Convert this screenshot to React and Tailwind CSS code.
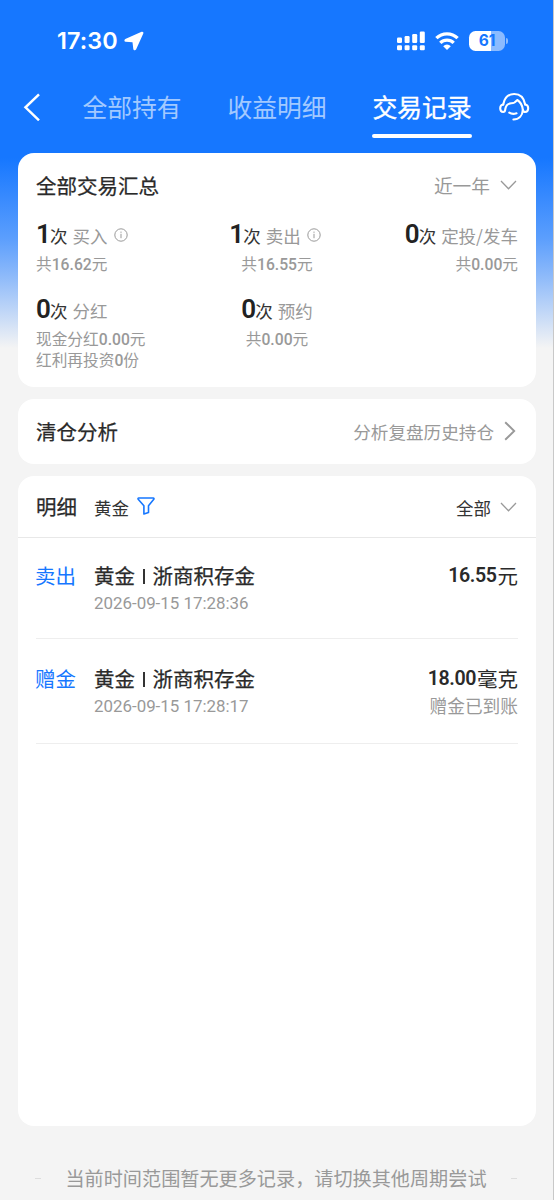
import React, { useState } from "react";
import clsx from "clsx";

const TABS = ["全部持有", "收益明细", "交易记录"];

const SUMMARY = [
  { count: 1, label: "买入", info: true, lines: [["共", "16.62", "元"]] },
  { count: 1, label: "卖出", info: true, lines: [["共", "16.55", "元"]] },
  { count: 0, label: "定投/发车", lines: [["共", "0.00", "元"]] },
  {
    count: 0,
    label: "分红",
    lines: [
      ["现金分红", "0.00", "元"],
      ["红利再投资", "0", "份"],
    ],
  },
  { count: 0, label: "预约", lines: [["共", "0.00", "元"]] },
];

const RECORDS = [
  {
    type: "卖出",
    product: "浙商积存金",
    time: "2026-09-15 17:28:36",
    amount: "16.55",
    unit: "元",
  },
  {
    type: "赠金",
    product: "浙商积存金",
    time: "2026-09-15 17:28:17",
    amount: "18.00",
    unit: "毫克",
    status: "赠金已到账",
  },
];

const ALIGN = ["items-start", "items-center", "items-end"];

// Semi-bold look for Chinese titles, lighter than the font's own medium weight
const TITLE = "text-[20.5px] text-[#2a2a2a] [-webkit-text-stroke:0.25px_#2a2a2a]";

const ChevronDown = () => (
  <svg className="mr-px h-[10px] w-[17px]" viewBox="0 0 17 10" fill="none" stroke="#999" strokeWidth="1.3">
    <path d="M1 1l7.5 7.8L16 1" />
  </svg>
);

const InfoIcon = () => (
  <svg className="mr-1 ml-[6px] mt-[2px] h-[14px] w-[14px]" viewBox="0 0 14 14" fill="none" stroke="#999">
    <circle cx="7" cy="7" r="6.2" />
    <path d="M7 5.8v4.4" />
    <path d="M7 3.6v1.2" />
  </svg>
);

const StatusBar = () => (
  <div className="flex h-[82px] shrink-0 items-center pl-[57px] pr-[45px] text-white">
    <span className="font-[Inter] text-[23.4px] font-semibold leading-none tracking-[0.1px]">17:30</span>
    <svg className="ml-[6px] h-[20px] w-[20px]" viewBox="0 0 20 20" fill="#fff">
      <path d="M17.600.8L1.300 8C0 8.700.1 10.700 1.600 10.800L8.500 11.200 9.300 17.900C9.500 19.500 11.500 19.700 12.200 18.200L19.300 2.500C19.800 1.200 18.800.3 17.600.8z" />
    </svg>
    <svg className="ml-auto h-[20px] w-[28px]" viewBox="0 0 28 20" fill="#fff">
      <rect x="0" y="6.5" width="5" height="5.5" rx="1.2" />
      <rect x="7.6" y="5" width="5" height="7" rx="1.2" />
      <rect x="15.2" y="3" width="5" height="9" rx="1.2" />
      <rect x="22.8" y=".5" width="5" height="11.5" rx="1.2" />
      <rect x="0" y="14.2" width="5" height="5" rx="1.2" />
      <rect x="7.6" y="14.2" width="5" height="5" rx="1.2" />
      <rect x="15.2" y="14.2" width="5" height="5" rx="1.2" />
      <rect x="22.8" y="14.2" width="5" height="5" rx="1.2" />
    </svg>
    <svg className="ml-[10px] h-[18px] w-[24px]" viewBox="0 0 24 18" fill="none" stroke="#fff" strokeWidth="3.3">
      <path d="M1.4 6.2a15 15 0 0 1 21.2 0" />
      <path d="M5.3 10.9a9.5 9.5 0 0 1 13.4 0" />
      <path d="M12 17.9L8.2 14.200a5.300 5.300 0 0 1 7.600 0z" fill="#fff" stroke="none" />
    </svg>
    <div className="ml-[10px] flex items-center">
      <div className="flex h-[20px] w-[36px] items-center justify-center rounded-[6.5px] bg-linear-to-r from-white from-61% to-[#8bbbff] to-61%">
        <span className="font-[Inter] text-[15.5px] font-bold leading-none text-[#1677ff]">61</span>
      </div>
      <div className="ml-px h-[6px] w-[2px] rounded-r-full bg-[#8bbbff]" />
    </div>
  </div>
);

const ServiceIcon = () => (
  <svg
    className="ml-[27px] mt-[10px] h-[30px] w-[31px]"
    viewBox="0 0 31 30"
    fill="none"
    stroke="#fff"
    strokeWidth="2.1"
    strokeLinecap="round"
    strokeLinejoin="round"
  >
    <path d="M4.2 12.5C5.5 5.7 9.5 2 15.2 2S25 5.7 26.2 12.5" />
    <path d="M4.2 12.5C2.2 12.8 1.2 14 1.2 16.3S2 20 4.2 20 6 18.8 6.3 17C6.9 13.3 9 11.5 12.2 11.3 15 11.1 16.8 10 18.2 8 21.3 9.8 23.2 13 23.8 17.5 24 19.3 24.6 20 26.1 20 28.4 20 29.2 18.5 29.2 16.3S28.1 12.8 26.2 12.5" />
    <path d="M23.8 18C23.5 23.5 20 27.5 14.4 27.5" />
    <path d="M10.3 20.7c1.9 1.3 4.7 1.5 7.2.6" />
  </svg>
);

const SummaryItem = ({ item, align }) => (
  <div className={clsx("flex flex-col", align)}>
    <div className="flex h-[30px] items-center text-[17.5px] text-[#999]">
      <span className="w-[14px] font-[Roboto] text-[26px] font-semibold leading-[30px] text-[#222]">
        {item.count}
      </span>
      <span className="mt-[3px] leading-[26px] text-[#333]">次</span>
      <span className="ml-[5px] mt-[3px] leading-[26px]">{item.label}</span>
      {item.info && <InfoIcon />}
    </div>
    <div className="mt-[4px] text-[15.7px] leading-[21px] text-[#999]">
      {item.lines.map(([before, value, after]) => (
        <p key={before} className="h-[21px]">
          {before}
          <span className="font-[Roboto] font-medium">{value}</span>
          {after}
        </p>
      ))}
    </div>
  </div>
);

const RecordRow = ({ record, className }) => (
  <div className={clsx("mx-[18px] flex border-b border-[#eee]", className)}>
    <div className="-ml-px w-[59px] text-[20.5px] leading-[28px] text-[#1677ff]">{record.type}</div>
    <div className="flex-1">
      <p className={clsx("flex items-center leading-[28px]", TITLE)}>
        黄金
        <span className="mx-[8px] mt-[2px] h-[15px] w-[1.5px] bg-[#333]" />
        {record.product}
      </p>
      <p className="mt-px font-[Roboto] text-[16.9px] leading-[26px] text-[#999]">{record.time}</p>
    </div>
    <div className="flex flex-col items-end">
      <p className="flex h-[28px] items-center text-[20.5px] leading-[28px] text-[#2a2a2a]">
        <span className="mr-[1px] mt-[2px] font-[Roboto] text-[19.6px] font-semibold tracking-[-0.4px]">
          {record.amount}
        </span>
        {record.unit}
      </p>
      {record.status && <p className="text-[17.7px] leading-[26px] text-[#999]">{record.status}</p>}
    </div>
  </div>
);

const App = () => {
  const [tab, setTab] = useState(2);

  return (
    <div className="flex h-[1200px] w-[554px] flex-col overflow-hidden border-r border-[#c8c8c8] bg-[#f4f4f4] bg-[linear-gradient(to_bottom,#1677ff_158px,#5b9efd_238px,#8cb9fa_275px,#f4f4f4_348px)] font-['Noto_Sans_CJK_SC',sans-serif]">
      <StatusBar />

      {/* Tabs */}
      <div className="flex h-[71px] shrink-0 items-start pl-[23px]">
        <svg className="mt-[11px] h-[28px] w-[18px]" viewBox="0 0 18 28" fill="none" stroke="#fff" strokeWidth="2.5">
          <path d="M16 1.3L2.5 14.3 16 27.3" />
        </svg>
        <div className="ml-[41px] flex gap-[45px]">
          {TABS.map((name, index) => (
            <button
              key={name}
              onClick={() => setTab(index)}
              className={clsx(
                "flex w-[100px] flex-col items-center whitespace-nowrap text-[24.8px] leading-[49px]",
                tab === index ? "text-white [-webkit-text-stroke:0.35px_#fff]" : "text-[#a2c9ff]"
              )}
            >
              {name}
              {tab === index && <span className="mt-[3px] h-[4px] w-full rounded-full bg-white" />}
            </button>
          ))}
        </div>
        <ServiceIcon />
      </div>

      <div className="flex flex-col gap-[12px] pl-[18px] pr-[17px]">
        {/* Summary */}
        <section className="h-[234px] rounded-2xl bg-white px-[18px] pt-[17px]">
          <div className="flex h-[30px] items-center justify-between">
            <h2 className={TITLE}>全部交易汇总</h2>
            <div className="flex items-center gap-[10px] text-[18.7px] text-[#999]">
              近一年
              <ChevronDown />
            </div>
          </div>
          <div className="mt-[19px] grid grid-cols-3 gap-y-[20px]">
            {SUMMARY.map((item, index) => (
              <SummaryItem key={item.label} item={item} align={ALIGN[index % 3]} />
            ))}
          </div>
        </section>

        {/* Closed position analysis */}
        <section className="flex h-[65px] items-center justify-between rounded-2xl bg-white px-[18px]">
          <h2 className={TITLE}>清仓分析</h2>
          <div className="flex items-center gap-[10px] text-[17.6px] text-[#999]">
            <span className="mt-[2px]">分析复盘历史持仓</span>
            <svg className="mr-[2px] h-[20px] w-[12px]" viewBox="0 0 12 20" fill="none" stroke="#999" strokeWidth="1.9">
              <path d="M1.2 1.2L10.2 10l-9 8.800" />
            </svg>
          </div>
        </section>

        {/* Records */}
        <section className="h-[650px] rounded-2xl bg-white">
          <div className="flex h-[62px] items-center border-b border-[#e8e8e8] px-[18px] text-[17.5px] text-[#333]">
            <h2 className={TITLE}>明细</h2>
            <span className="ml-[17px] mt-[3px]">黄金</span>
            <svg
              className="ml-[8px] mb-[2px] h-[18px] w-[18px]"
              viewBox="0 0 18 18"
              fill="none"
              stroke="#1677ff"
              strokeWidth="1.6"
              strokeLinejoin="round"
            >
              <path d="M1.7 1h14.6c.7 0 .9.7.5 1.2L11.5 8.8v6.7L6.9 17V8.8L1.2 2.2C.8 1.7 1 1 1.7 1z" />
            </svg>
            <div className="ml-auto flex items-center gap-[9px]">
              <span className="mt-[3px]">全部</span>
              <ChevronDown />
            </div>
          </div>
          {RECORDS.map((record, index) => (
            <RecordRow
              key={record.time}
              record={record}
              className={index === 0 ? "h-[101px] pt-[23px]" : "h-[105px] pt-[25px]"}
            />
          ))}
        </section>
      </div>

      {/* Footer */}
      <div className="mt-[38px] flex items-center justify-between pl-[35px] pr-[36px] text-[19.15px] leading-[28px] text-[#999]">
        <span className="h-px w-[6px] bg-[#ddd]" />
        当前时间范围暂无更多记录，请切换其他周期尝试
        <span className="h-px w-[6px] bg-[#ddd]" />
      </div>
    </div>
  );
};

export default App;
